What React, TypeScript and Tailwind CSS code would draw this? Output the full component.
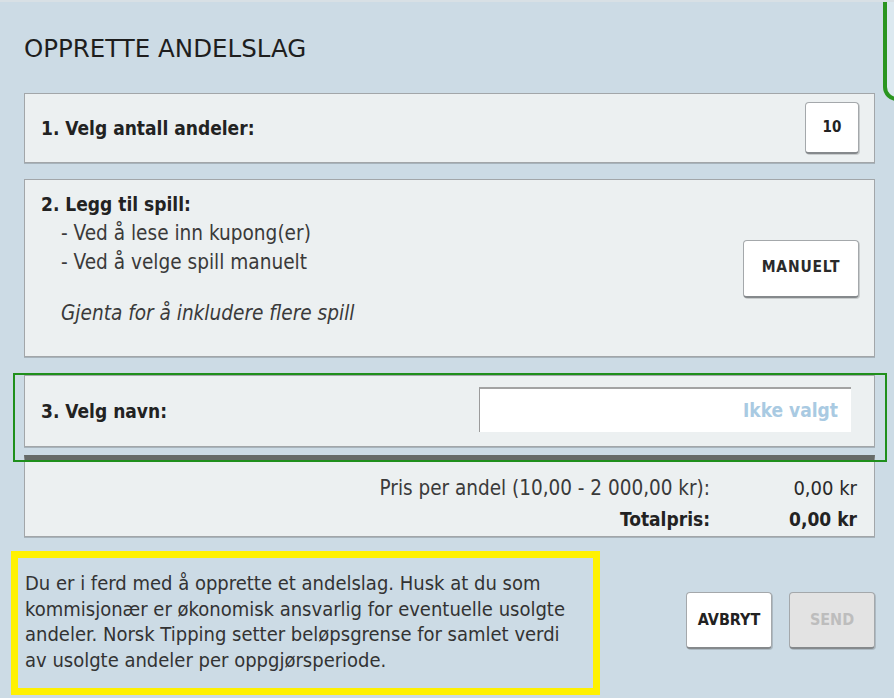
import React from "react";

const font = "font-['DejaVu_Sans_Condensed','DejaVu_Sans',sans-serif]";

function Btn({
  children,
  className = "",
}: {
  children: React.ReactNode;
  className?: string;
}) {
  return (
    <div
      className={
        "flex items-center justify-center rounded-[4px] border border-[#a4a8ab] border-b-2 border-b-[#85898c] shadow-[1px_1px_0_rgba(0,0,0,0.15)] " +
        className
      }
    >
      {children}
    </div>
  );
}

export default function App() {
  return (
    <div
      className={`relative w-[894px] h-[698px] overflow-hidden bg-[#ccdbe5] border-t-2 border-t-[#d8e0e5] ${font} text-[#222]`}
    >
      {/* partially visible element at the top-right edge */}
      <div className="absolute left-[883px] top-[-30px] w-[60px] h-[129px] rounded-[14px] border-[4px] border-[#2a9520] bg-[#dce9f0]" />

      <div className="pl-[24px] pr-[19px]">
        {/* Title */}
        <div className="pt-[34px] h-[91px] font-['DejaVu_Sans',sans-serif] text-[24.5px] leading-[26px] text-[#1e1e1e]">
          OPPRETTE ANDELSLAG
        </div>

        {/* Box 1 */}
        <div className="h-[70px] flex items-center justify-between pl-[16px] pr-[15px] bg-[#ecf0f1] border border-[#a2a6a9] shadow-[0_1px_0_rgba(0,0,0,0.18)]">
          <span className="text-[19px] font-bold">1. Velg antall andeler:</span>
          <Btn className="w-[54px] h-[52px] bg-white">
            <span className="text-[15px] font-bold">10</span>
          </Btn>
        </div>

        {/* Box 2 */}
        <div className="mt-[16px] h-[178px] flex items-center justify-between pl-[16px] pr-[15px] bg-[#ecf0f1] border border-[#a2a6a9] shadow-[0_1px_0_rgba(0,0,0,0.18)]">
          <div className="self-start pt-[10px] leading-[29px]">
            <div className="text-[19px] font-bold">2. Legg til spill:</div>
            <div className="pl-[20px] text-[20.6px] text-[#3a3a3a]">
              <div>- Ved å lese inn kupong(er)</div>
              <div>- Ved å velge spill manuelt</div>
              <div className="mt-[22px] italic">
                Gjenta for å inkludere flere spill
              </div>
            </div>
          </div>
          <Btn className="w-[116px] h-[58px] bg-white mt-[1px]">
            <span className="text-[15.5px] font-bold tracking-[0.8px] text-[#2a2a2a]">
              MANUELT
            </span>
          </Btn>
        </div>

        {/* Box 3 + price box with highlight */}
        <div className="relative mt-[18px]">
          <div className="h-[72px] flex items-center justify-between pl-[16px] pr-[23px] bg-[#ecf0f1] border border-[#a2a6a9] shadow-[0_1px_0_rgba(0,0,0,0.18)]">
            <span className="text-[19px] font-bold">3. Velg navn:</span>
            <div className="w-[372px] h-[45px] mb-[3px] bg-white border-t-2 border-t-[#a3a3a3] border-l border-l-[#9b9b9b] flex items-center justify-end pr-[13px]">
              <span className="text-[19px] font-bold text-[#a9cae2]">
                Ikke valgt
              </span>
            </div>
          </div>

          <div className="mt-[8px] h-[82px] bg-[#ecf0f1] border border-[#a2a6a9] border-t-[6px] border-t-[#666a68] pt-[13px] pr-[17px] grid grid-cols-[1fr_147px] text-right leading-[29px] shadow-[0_1px_0_rgba(0,0,0,0.18)]">
            <div className="text-[20.5px] text-[#3a3a3a]">
              Pris per andel (10,00 - 2 000,00 kr):
            </div>
            <div className="text-[20px] text-[#2a2a2a]">0,00 kr</div>
            <div className="text-[19px] font-bold">Totalpris:</div>
            <div className="text-[19px] font-bold">0,00 kr</div>
          </div>

          <div className="pointer-events-none absolute left-[-11px] right-[-12px] top-[-2px] h-[89px] border-2 border-[#1f8f1c]" />
        </div>

        {/* Bottom row */}
        <div className="mt-[14px] flex items-start">
          <div className="ml-[-13px] w-[589px] h-[144px] border-[7px] border-[#fff100] pl-[7px] pt-[13px] text-[20px] leading-[25.5px] text-[#333]">
            Du er i ferd med å opprette et andelslag. Husk at du som
            <br />
            kommisjonær er økonomisk ansvarlig for eventuelle usolgte
            <br />
            andeler. Norsk Tipping setter beløpsgrense for samlet verdi
            <br />
            av usolgte andeler per oppgjørsperiode.
          </div>
          <div className="ml-auto mt-[41px] flex gap-[17px]">
            <Btn className="w-[86px] h-[57px] bg-white">
              <span className="text-[16px] font-bold text-[#222]">AVBRYT</span>
            </Btn>
            <Btn className="w-[86px] h-[57px] bg-[#e3e3e3]">
              <span className="text-[16px] font-bold text-[#bdbdbd]">SEND</span>
            </Btn>
          </div>
        </div>
      </div>
    </div>
  );
}
